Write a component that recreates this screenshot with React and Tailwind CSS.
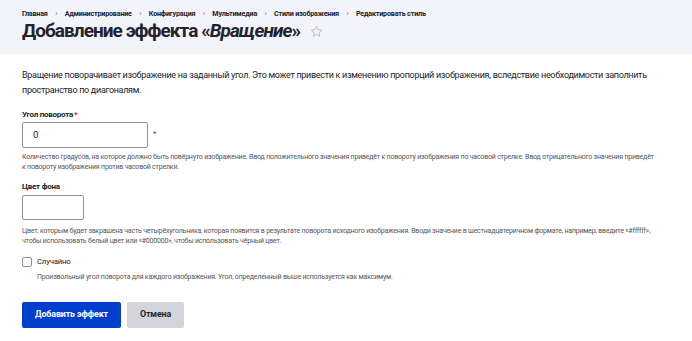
import React from 'react';

const CRUMBS = ['Главная', 'Администрирование', 'Конфигурация', 'Мультимедиа', 'Стили изображения', 'Редактировать стиль'];

function Star() {
  return (
    <svg width="13" height="13" viewBox="0 0 24 24" fill="none" stroke="#b8b9c0" strokeWidth="1.7" strokeLinejoin="round">
      <path d="M12 2.5l2.9 6.2 6.7.8-5 4.6 1.4 6.7L12 17.4l-6 3.4 1.4-6.7-5-4.6 6.7-.8z" />
    </svg>
  );
}

export default function App() {
  return (
    <div className="min-h-[341px] bg-white text-[#222330]" style={{ fontFamily: 'Roboto, "Liberation Sans", sans-serif' }}>
      {/* header */}
      <div className="bg-[#f3f4f9] h-[54px] px-[22px] pt-[9px]">
        <ol className="flex items-center text-[7.2px] font-bold leading-[10px] tracking-[-0.2px] text-[#222330]">
          {CRUMBS.map((c, i) => (
            <li key={c} className="flex items-center">
              {i > 0 && <span className="px-[7.5px] text-[#6b6c75] font-normal">›</span>}
              {c}
            </li>
          ))}
        </ol>
        <h1 className="-mt-[1px] flex items-center text-[19px] font-bold leading-[26px] tracking-[-0.95px]">
          Добавление эффекта «<em className="italic">Вращение</em>»
          <span className="ml-[10px] mt-[1px]"><Star /></span>
        </h1>
      </div>

      <div className="px-[22px]">
        <p className="mt-[14px] text-[9px] leading-[15px] tracking-[-0.3px] text-[#232429]">
          Вращение поворачивает изображение на заданный угол. Это может привести к изменению пропорций изображения, вследствие необходимости заполнить пространство по диагоналям.
        </p>

        {/* angle */}
        <div className="mt-[12px]">
          <label className="block text-[8px] font-bold leading-[10px] tracking-[-0.25px]">
            Угол поворота<span className="text-[#d72222] ml-[1px]">*</span>
          </label>
          <div className="mt-[2px] flex items-start">
            <div className="w-[126px] h-[26px] border border-[#8e929c] rounded-[2px] flex items-center px-[10px] text-[9.5px]">0</div>
            <span className="ml-[5px] mt-[6px] text-[8px] text-[#55565b]">*</span>
          </div>
          <p className="mt-[4px] text-[7px] leading-[10px] tracking-[-0.2px] text-[#55565b] pr-[14px]">
            Количество градусов, на которое должно быть повёрнуто изображение. Ввод положительного значения приведёт к повороту изображения по часовой стрелке. Ввод отрицательного значения приведёт к повороту изображения против часовой стрелки.
          </p>
        </div>

        {/* bg color */}
        <div className="mt-[10px]">
          <label className="block text-[8px] font-bold leading-[10px] tracking-[-0.25px]">Цвет фона</label>
          <div className="mt-[3px] w-[62px] h-[25px] border border-[#8e929c] rounded-[2px]" />
          <p className="mt-[6px] text-[7px] leading-[10px] tracking-[-0.2px] text-[#55565b] pr-[10px]">
            Цвет, которым будет закрашена часть четырёхугольника, которая появится в результате поворота исходного изображения. Вводи значение в шестнадцатеричном формате, например, введите «#ffffff», чтобы использовать белый цвет или «#000000», чтобы использовать чёрный цвет.
          </p>
        </div>

        {/* random */}
        <div className="mt-[11px]">
          <label className="flex items-center gap-[5px] text-[7.8px] leading-[10px] tracking-[-0.2px]">
            <span className="w-[10px] h-[10px] border border-[#8e929c] rounded-[2px] bg-white" />
            Случайно
          </label>
          <p className="mt-[5px] ml-[15px] text-[7px] leading-[10px] tracking-[-0.2px] text-[#55565b]">
            Произвольный угол поворота для каждого изображения. Угол, определенный выше используется как максимум.
          </p>
        </div>

        {/* actions */}
        <div className="mt-[20px] flex gap-[6px]">
          <button className="w-[99px] h-[26px] rounded-[2px] bg-[#003ecc] text-white text-[8.8px] font-bold tracking-[-0.1px]">Добавить эффект</button>
          <button className="w-[57px] h-[26px] rounded-[2px] bg-[#d3d4d9] text-[#222330] text-[8.8px] font-bold tracking-[-0.1px]">Отмена</button>
        </div>
      </div>
    </div>
  );
}
